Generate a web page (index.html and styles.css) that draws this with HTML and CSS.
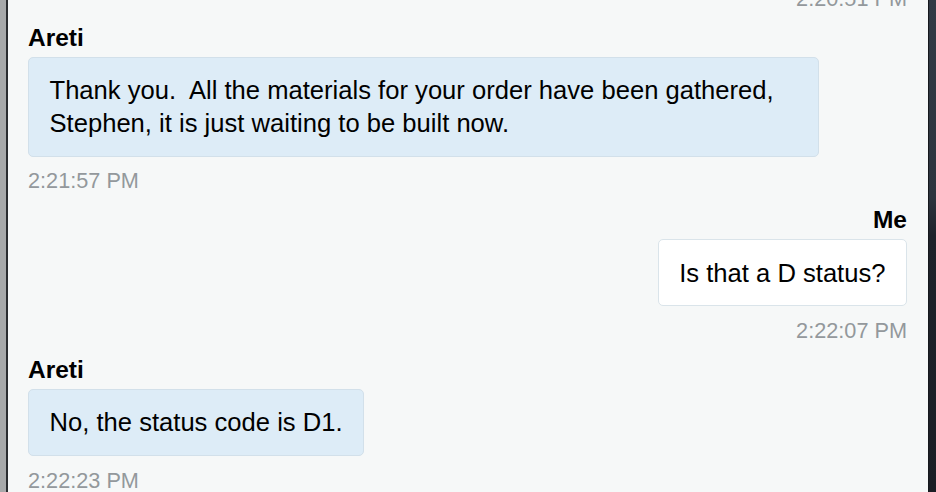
FILE: index.html
```html
<!DOCTYPE html>
<html>
<head>
<meta charset="utf-8">
<link rel="stylesheet" href="styles.css">
</head>
<body>
<div class="frame">
  <div class="side-left"></div>
  <main class="chat">
    <div class="msg me first">
      <div class="time">2:20:51 PM</div>
    </div>
    <div class="msg them">
      <div class="name">Areti</div>
      <div class="bubble wide">Thank you.&nbsp; All the materials for your order have been gathered, Stephen, it is just waiting to be built now.</div>
      <div class="time">2:21:57 PM</div>
    </div>
    <div class="msg me">
      <div class="name">Me</div>
      <div class="bubble">Is that a D status?</div>
      <div class="time">2:22:07 PM</div>
    </div>
    <div class="msg them">
      <div class="name">Areti</div>
      <div class="bubble">No, the status code is D1.</div>
      <div class="time">2:22:23 PM</div>
    </div>
  </main>
  <div class="side-right"></div>
</div>
</body>
</html>
```
FILE: styles.css
```css
html, body {
  margin: 0;
  padding: 0;
  height: 100%;
  overflow: hidden;
}
body {
  font-family: "Liberation Sans", Arial, Helvetica, sans-serif;
  color: #000;
}
.frame {
  display: flex;
  height: 492px;
}
.side-left {
  width: 6px;
  background: #a7a9aa;
  border-right: 2px solid #2b2d30;
  flex: none;
}
.side-right {
  width: 7px;
  flex: none;
  border-left: 1px solid #15181d;
  background: linear-gradient(to bottom, #323a45 0%, #2d343e 40%, #1e222a 48%, #1b1e25 100%);
}
.chat {
  flex: 1;
  background: #f6f8f8;
  padding: 0 21px 0 20px;
  display: flex;
  flex-direction: column;
  overflow: hidden;
}
.msg {
  display: flex;
  flex-direction: column;
  align-items: flex-start;
  margin-bottom: 11px;
}
.msg.me {
  align-items: flex-end;
}
.msg.first {
  margin-top: -14px;
}
.name {
  font-weight: bold;
  font-size: 24.5px;
  line-height: 30px;
  margin-bottom: 4px;
}
.bubble {
  font-size: 25.6px;
  line-height: 32.5px;
  padding: 16.25px 20.5px;
  border-radius: 5px;
  max-width: 90%;
  box-sizing: border-box;
}
.them .bubble {
  background: #ddecf7;
  border: 1px solid #d2e0ea;
}
.them .bubble.wide {
  width: 90%;
}
.me .bubble {
  background: #ffffff;
  border: 1px solid #dae4ea;
}
.time {
  font-size: 21.7px;
  line-height: 26px;
  color: #93989c;
  margin-top: 11.8px;
}
.msg.first .time {
  margin-top: 0;
}
```
